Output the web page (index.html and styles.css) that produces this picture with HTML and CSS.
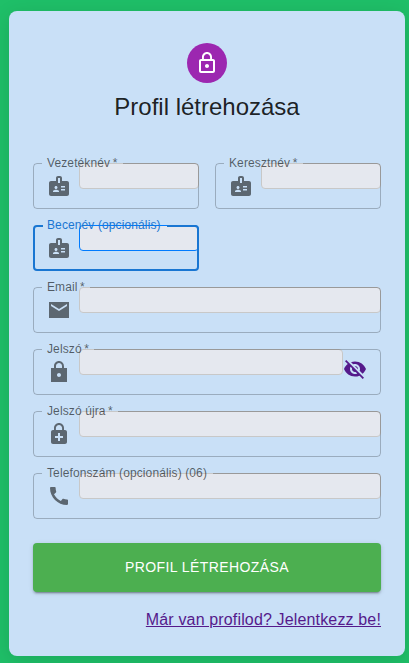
FILE: index.html
```html
<!DOCTYPE html>
<html lang="hu">
<head>
<meta charset="utf-8">
<title>Profil létrehozása</title>
<link rel="stylesheet" href="styles.css">
</head>
<body>
<svg class="defs" width="0" height="0" aria-hidden="true">
  <symbol id="badge" viewBox="0 0 24 24"><path d="M20 7h-5V4c0-1.100-.9-2-2-2h-2c-1.100 0-2 .9-2 2v3H4c-1.100 0-2 .9-2 2v11c0 1.100.9 2 2 2h16c1.100 0 2-.9 2-2V9c0-1.100-.9-2-2-2zM9 12c.83 0 1.500.67 1.500 1.500S9.830 15 9 15s-1.500-.67-1.500-1.500S8.170 12 9 12zm3 6H6v-.75c0-1 2-1.500 3-1.500s3 .5 3 1.500V18zm1-9h-2V4h2v5zm5 7.500h-4V15h4v1.500zm0-3h-4V12h4v1.500z"/></symbol>
</svg>
<main class="card">
  <div class="avatar"><svg class="icon" viewBox="0 0 24 24"><path d="M12 17c1.100 0 2-.9 2-2s-.9-2-2-2-2 .9-2 2 .9 2 2 2zm6-9h-1V6c0-2.760-2.240-5-5-5S7 3.240 7 6v2H6c-1.100 0-2 .9-2 2v10c0 1.100.9 2 2 2h12c1.100 0 2-.9 2-2V10c0-1.100-.9-2-2-2zM8.900 6c0-1.710 1.390-3.100 3.100-3.100s3.100 1.390 3.100 3.100v2H8.900V6zM18 20H6V10h12v10z"/></svg></div>
  <h1>Profil létrehozása</h1>
  <form class="grid">
    <div class="field">
      <label for="last">Vezetéknév&thinsp;*</label>
      <svg class="icon"><use href="#badge"/></svg>
      <input id="last" type="text">
      <fieldset aria-hidden="true"><legend><span>Vezetéknév&thinsp;*</span></legend></fieldset>
    </div>
    <div class="field">
      <label for="first">Keresztnév&thinsp;*</label>
      <svg class="icon"><use href="#badge"/></svg>
      <input id="first" type="text">
      <fieldset aria-hidden="true"><legend><span>Keresztnév&thinsp;*</span></legend></fieldset>
    </div>
    <div class="field active">
      <label for="nick">Becenév (opcionális)</label>
      <svg class="icon"><use href="#badge"/></svg>
      <input id="nick" type="text">
      <fieldset aria-hidden="true"><legend><span>Becenév (opcionális)</span></legend></fieldset>
    </div>
    <div class="field wide">
      <label for="email">Email&thinsp;*</label>
      <svg class="icon" viewBox="0 0 24 24"><path d="M22 4H2v16h20V4zm-2 4l-8 5-8-5V6l8 5 8-5v2z"/></svg>
      <input id="email" type="text">
      <fieldset aria-hidden="true"><legend><span>Email&thinsp;*</span></legend></fieldset>
    </div>
    <div class="field wide with-end">
      <label for="pass">Jelszó&thinsp;*</label>
      <svg class="icon" viewBox="0 0 24 24"><path d="M20 8h-3V6.210c0-2.610-1.910-4.940-4.510-5.190C9.510.74 7 3.080 7 6v2H4v14h16V8zm-8 9c-1.100 0-2-.9-2-2s.9-2 2-2 2 .9 2 2-.9 2-2 2zM9 8V6c0-1.660 1.340-3 3-3s3 1.340 3 3v2H9z"/></svg>
      <input id="pass" type="password">
      <svg class="icon eye" viewBox="0 0 24 24"><path d="M12 7c2.760 0 5 2.240 5 5 0 .65-.13 1.260-.36 1.830l2.920 2.920c1.510-1.260 2.700-2.890 3.430-4.750-1.730-4.390-6-7.500-11-7.500-1.400 0-2.740.25-3.980.7l2.160 2.160C10.740 7.130 11.350 7 12 7zM2 4.270l2.280 2.280.46.46C3.080 8.300 1.780 10.020 1 12c1.730 4.390 6 7.500 11 7.500 1.550 0 3.030-.3 4.380-.84l.42.42L19.730 22 21 20.730 3.270 3 2 4.270zM7.530 9.800l1.550 1.550c-.05.21-.08.43-.08.65 0 1.660 1.340 3 3 3 .22 0 .44-.03.65-.08l1.550 1.550c-.67.33-1.410.53-2.200.53-2.760 0-5-2.240-5-5 0-.79.2-1.530.53-2.200zm4.310-.78l3.150 3.150.02-.16c0-1.660-1.340-3-3-3l-.17.01z"/></svg>
      <fieldset aria-hidden="true"><legend><span>Jelszó&thinsp;*</span></legend></fieldset>
    </div>
    <div class="field wide">
      <label for="again">Jelszó újra&thinsp;*</label>
      <svg class="icon" viewBox="0 0 24 24"><path d="M18 8h-1V6c0-2.760-2.240-5-5-5S7 3.240 7 6v2H6c-1.100 0-2 .9-2 2v10c0 1.100.9 2 2 2h12c1.100 0 2-.9 2-2V10c0-1.100-.9-2-2-2zM8.900 6c0-1.710 1.390-3.100 3.100-3.100s3.100 1.390 3.100 3.100v2H8.900V6zM16 16h-3v3h-2v-3H8v-2h3v-3h2v3h3v2z"/></svg>
      <input id="again" type="password">
      <fieldset aria-hidden="true"><legend><span>Jelszó újra&thinsp;*</span></legend></fieldset>
    </div>
    <div class="field wide">
      <label for="phone">Telefonszám (opcionális) (06)</label>
      <svg class="icon" viewBox="0 0 24 24"><path d="M20.010 15.380c-1.230 0-2.420-.2-3.530-.56-.35-.12-.74-.03-1.010.24l-1.570 1.970c-2.830-1.350-5.480-3.900-6.890-6.830l1.950-1.660c.27-.28.35-.67.24-1.020-.37-1.110-.56-2.300-.56-3.530 0-.54-.45-.99-.99-.99H4.190C3.650 3 3 3.240 3 3.990 3 13.280 10.730 21 20.010 21c.71 0 .99-.63.99-1.180v-3.450c0-.54-.45-.99-.99-.99z"/></svg>
      <input id="phone" type="text">
      <fieldset aria-hidden="true"><legend><span>Telefonszám (opcionális) (06)</span></legend></fieldset>
    </div>
    <button class="submit wide" type="button">Profil létrehozása</button>
  </form>
  <a class="login" href="#">Már van profilod? Jelentkezz be!</a>
</main>
</body>
</html>
```
FILE: styles.css
```css
* { box-sizing: border-box; }

body {
  margin: 0;
  padding: 11px 4px 7px 9px;
  background: #1fbf68;
  font-family: "Liberation Sans", Arial, sans-serif;
  font-size: 16px;
  color: rgba(0, 0, 0, 0.87);
}

.defs { display: block; }

.card {
  display: flex;
  flex-direction: column;
  align-items: center;
  height: 645px;
  padding: 32px 24px 0;
  border-radius: 8px;
  background: #c9e0f7;
  box-shadow: 0 4px 20px rgba(0, 0, 0, 0.12);
}

.icon {
  flex: none;
  width: 24px;
  height: 24px;
  fill: currentColor;
}

.avatar {
  display: flex;
  align-items: center;
  justify-content: center;
  width: 40px;
  height: 40px;
  border-radius: 50%;
  background: #9c27b0;
  color: #fff;
}

h1 {
  margin: 8px 0 0;
  font-size: 24px;
  font-weight: 400;
  line-height: 32px;
}

.grid {
  display: grid;
  grid-template-columns: repeat(2, minmax(0, 1fr));
  gap: 16px;
  width: 100%;
  margin-top: 40px;
}

.wide { grid-column: 1 / -1; }

.field {
  position: relative;
  display: flex;
  align-items: center;
  height: 46px;
  padding-left: 14px;
  color: rgba(0, 0, 0, 0.54);
}

.field label {
  position: absolute;
  top: 0;
  left: 0;
  z-index: 1;
  line-height: 23px;
  letter-spacing: 0.15px;
  white-space: nowrap;
  color: rgba(0, 0, 0, 0.6);
  transform-origin: top left;
  transform: translate(14px, -9px) scale(0.75);
}

.field input {
  flex: 1;
  align-self: flex-start;
  min-width: 0;
  height: 26px;
  margin: 0 0 0 8px;
  border: 1px solid #c8c8c8;
  border-radius: 4px;
  background: #e5e8ef;
  outline: 0;
}

.with-end { padding-right: 14px; }

.eye {
  margin-bottom: 6px;
  color: #551a8b;
}

.field fieldset {
  position: absolute;
  inset: -5px 0 0;
  min-width: 0;
  margin: 0;
  padding: 0 8px;
  border: 1px solid rgba(0, 0, 0, 0.23);
  border-radius: 4px;
  pointer-events: none;
}

.field legend {
  height: 11px;
  padding: 0;
  font-size: 12px;
  letter-spacing: 0.15px;
  line-height: 11px;
  white-space: nowrap;
  visibility: hidden;
}

.field legend span {
  display: inline-block;
  padding: 0 5px;
}

.active label { color: #1976d2; }
.active input { border-color: #007bff; }
.active fieldset { border: 2px solid #1976d2; }

.submit {
  height: 49px;
  margin-top: 8px;
  padding: 0 0 2px;
  border: 0;
  border-radius: 4px;
  background: #4caf50;
  box-shadow: 0 3px 1px -2px rgba(0, 0, 0, 0.2), 0 2px 2px rgba(0, 0, 0, 0.14), 0 1px 5px rgba(0, 0, 0, 0.12);
  color: #fff;
  font: 14px/24px "Liberation Sans", Arial, sans-serif;
  letter-spacing: 0.4px;
  text-transform: uppercase;
}

.login {
  align-self: flex-end;
  margin-top: 16px;
  line-height: 24px;
  letter-spacing: 0.15px;
  color: #551a8b;
}
```
